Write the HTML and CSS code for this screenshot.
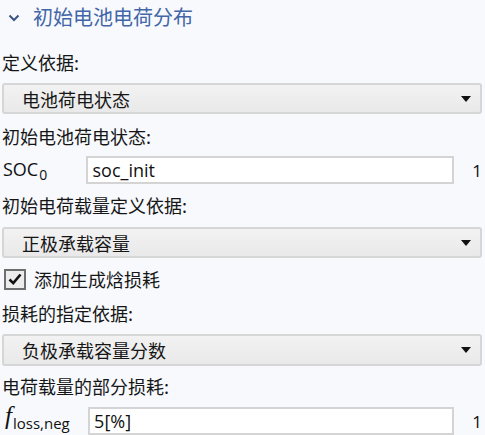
FILE: index.html
```html
<!DOCTYPE html>
<html lang="zh">
<head>
<meta charset="utf-8">
<link rel="stylesheet" href="styles.css">
</head>
<body>
<div class="panel">
  <div class="header">
    <svg class="chev" width="12" height="8" viewBox="0 0 12 8"><path d="M1.5 1.5 L6 6 L10.5 1.5" fill="none" stroke="#3d5580" stroke-width="2"/></svg>
    <span class="title">初始电池电荷分布</span>
  </div>

  <div class="label l1">定义依据:</div>
  <div class="select s1"><span>电池荷电状态</span><i class="arrow"></i></div>

  <div class="label l2">初始电池荷电状态:</div>
  <div class="field f1">
    <div class="sym soc">SOC<sub>0</sub></div>
    <div class="input">soc_init</div>
    <div class="unit">1</div>
  </div>

  <div class="label l3">初始电荷载量定义依据:</div>
  <div class="select s2"><span>正极承载容量</span><i class="arrow"></i></div>

  <div class="check">
    <span class="box"><svg width="16" height="16" viewBox="0 0 16 16"><path d="M2.5 8.5 L6.3 12.2 L13.5 3.5" fill="none" stroke="#111" stroke-width="2.6"/></svg></span>
    <span class="ctext">添加生成焓损耗</span>
  </div>

  <div class="label l4">损耗的指定依据:</div>
  <div class="select s3"><span>负极承载容量分数</span><i class="arrow"></i></div>

  <div class="label l5">电荷载量的部分损耗:</div>
  <div class="field f2">
    <div class="sym floss"><span class="fi">f</span><sub>loss,neg</sub></div>
    <div class="input">5[%]</div>
    <div class="unit">1</div>
  </div>
</div>
</body>
</html>
```
FILE: styles.css
```css
html, body {
  margin: 0;
  padding: 0;
  background: #f7f9fd;
}
body {
  font-family: "Noto Sans CJK SC", "Noto Sans", sans-serif;
  color: #161616;
  overflow: hidden;
}
.panel {
  width: 480px;
  padding-left: 2px;
  display: flex;
  flex-direction: column;
}
.header {
  height: 34px;
  display: flex;
  align-items: center;
}
.chev {
  margin-left: 6px;
  margin-top: 2px;
}
.title {
  margin-left: 13px;
  font-size: 20px;
  color: #4266a8;
  line-height: 34px;
}
.label {
  font-size: 18px;
  line-height: 32px;
  height: 32px;
  white-space: nowrap;
}
.l1 { margin-top: 12px; }
.l2 { margin-top: 6px; }
.l3 { margin-top: 5px; }
.l4 { margin-top: 7px; }
.l5 { margin-top: 4px; }

.select {
  box-sizing: border-box;
  height: 31px;
  border: 2px solid #d6d6d6;
  border-radius: 3px;
  background: linear-gradient(#f2f2f2, #e9e9e9);
  display: flex;
  align-items: center;
  padding: 0 9px 0 18px;
  font-size: 18px;
}
.select span { flex: 1; }
.s1 { margin-top: 5px; }
.s2 { margin-top: 6px; }
.s3 { margin-top: 5px; height: 32px; }
.arrow {
  width: 0;
  height: 0;
  border-left: 5px solid transparent;
  border-right: 5px solid transparent;
  border-top: 6px solid #111;
}

.field {
  display: flex;
  align-items: center;
  height: 28px;
  margin-top: 4px;
}
.f2 { margin-top: 5px; }
.sym {
  width: 84px;
  font-family: "Open Sans", "Noto Sans", sans-serif;
  color: #111;
  white-space: nowrap;
}
.soc {
  padding-left: 1px;
  font-size: 18px;
  font-weight: 500;
}
.soc sub {
  font-size: 14px;
  font-weight: 400;
  vertical-align: -4px;
  margin-left: 1px;
}
.floss {
  padding-left: 3px;
  line-height: 28px;
  margin-top: -4px;
}
.fi {
  font-family: "Liberation Serif", serif;
  font-style: italic;
  font-size: 25px;
}
.floss sub {
  font-size: 15px;
  vertical-align: -5px;
  margin-left: 1px;
}
.input {
  box-sizing: border-box;
  width: 370px;
  height: 28px;
  border: 2px solid #d4d4d4;
  background: #fff;
  font-family: "Open Sans", "Noto Sans", sans-serif;
  font-size: 18px;
  line-height: 24px;
  padding-left: 4px;
  color: #111;
}
.unit {
  margin-left: 18px;
  font-family: "Open Sans", "Noto Sans", sans-serif;
  font-size: 17px;
  color: #111;
}

.check {
  display: flex;
  align-items: center;
  height: 22px;
  margin-top: 10px;
}
.box {
  box-sizing: border-box;
  width: 22px;
  height: 21px;
  margin-left: 2px;
  border: 2px solid #6e6e6e;
  background: #ececec;
  display: flex;
  align-items: center;
  justify-content: center;
}
.ctext {
  margin-left: 8px;
  font-size: 18px;
}
```
